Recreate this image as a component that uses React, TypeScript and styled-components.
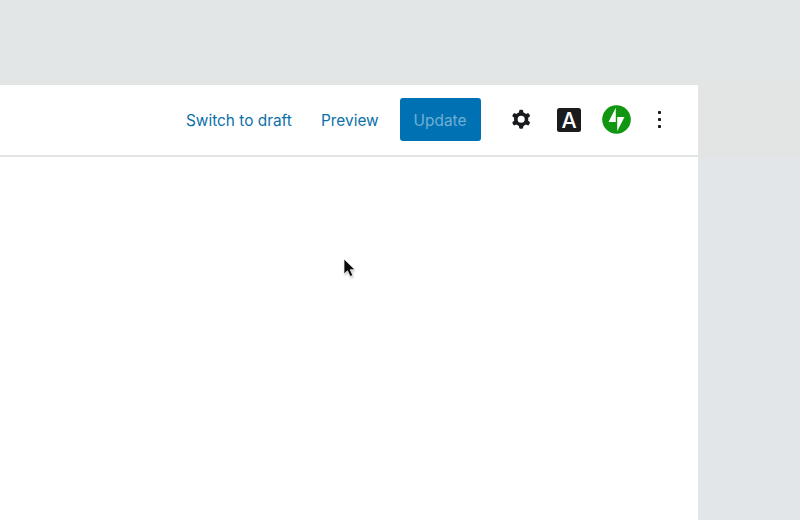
import React from "react";
import styled, { createGlobalStyle } from "styled-components";

const GlobalStyle = createGlobalStyle`
  html, body { margin: 0; padding: 0; }
  body { overflow: hidden; background: #e2e6e7; }
`;

const Desktop = styled.div`
  box-sizing: border-box;
  width: 800px;
  height: 520px;
  padding: 85px 102px 0 0;
  background: linear-gradient(#e2e6e7 0 80px, #e3e5e5 80px 157px, #e3e6e8 157px);
  font-family: Inter, "Liberation Sans", sans-serif;
`;

const EditorWindow = styled.main`
  position: relative;
  height: 435px;
  background: #fff;
`;

const Toolbar = styled.header`
  box-sizing: border-box;
  display: flex;
  align-items: flex-start;
  height: 72px;
  padding: 13px 22px 0 186px;
  border-bottom: 2px solid #e2e4e5;
`;

const TextButton = styled.button<{ $width: number; $gap: number }>`
  width: ${(p) => p.$width}px;
  height: 43px;
  margin: 0 ${(p) => p.$gap}px 0 0;
  padding: 1px 0 0;
  border: 0;
  background: none;
  color: #0c70a9;
  font: 430 15.4px/43px Inter, sans-serif;
  text-align: left;
  white-space: nowrap;
`;

const UpdateButton = styled.button`
  width: 81px;
  height: 43px;
  margin: 0 26px 0 0;
  padding: 1px 0 0;
  border: 0;
  border-radius: 3px;
  background: #0071b2;
  color: #70afd5;
  font: 430 15.4px/43px Inter, sans-serif;
  text-align: center;
`;

const IconButton = styled.button<{ $width: number; $gap: number }>`
  display: flex;
  align-items: center;
  justify-content: center;
  width: ${(p) => p.$width}px;
  height: 43px;
  margin: 0 ${(p) => p.$gap}px 0 0;
  padding: 0;
  border: 0;
  background: none;
  color: #1a1b1d;
  svg { flex: none; display: block; }
`;

const LetterBadge = styled.span`
  width: 24px;
  height: 24px;
  border-radius: 2.5px;
  background: #1a1b1d;
  color: #fff;
  font: 500 21.5px/24px Inter, sans-serif;
  text-align: center;
`;

const Pointer = styled.svg`
  position: absolute;
  left: 340px;
  top: 171px;
`;

const PointerShadow = styled.path`
  fill: #777;
  opacity: 0.4;
  filter: blur(1px);
`;

const Cog = () => (
  <svg width="28.5" height="28.5" viewBox="0 0 24 24" fill="currentColor" fillRule="evenodd">
    <path d="M10.289 4.836A1 1 0 0111.275 4h1.306a1 1 0 01.987.836l.244 1.466c.787.26 1.503.679 2.108 1.218l1.393-.522a1 1 0 011.216.437l.653 1.13a1 1 0 01-.23 1.273l-1.148.944a6.025 6.025 0 010 2.435l1.149.946a1 1 0 01.23 1.272l-.653 1.13a1 1 0 01-1.216.437l-1.394-.522c-.605.54-1.32.958-2.108 1.218l-.244 1.466a1 1 0 01-.987.836h-1.306a1 1 0 01-.986-.836l-.244-1.466a5.995 5.995 0 01-2.108-1.218l-1.394.522a1 1 0 01-1.217-.436l-.653-1.131a1 1 0 01.23-1.272l1.149-.946a6.026 6.026 0 010-2.435l-1.148-.944a1 1 0 01-.23-1.272l.653-1.131a1 1 0 011.217-.437l1.393.522a5.994 5.994 0 012.108-1.218l.244-1.466zM14.929 12a3 3 0 11-6 0 3 3 0 016 0z" />
  </svg>
);

const Jetpack = () => (
  <svg width="29" height="29" viewBox="0 0 32 32">
    <circle cx="16" cy="16" r="15.8" fill="#109610" />
    <path d="M15.2 18.7H7.2L15.2 3.1ZM16.8 28.9V13.3H24.8Z" fill="#fff" />
  </svg>
);

const MoreDots = () => (
  <svg width="5" height="19" viewBox="0 0 5 19" fill="#1a1b1d">
    <rect x="1" y="1" width="3" height="3" rx=".7" />
    <rect x="1" y="8" width="3" height="3" rx=".7" />
    <rect x="1" y="15" width="3" height="3" rx=".7" />
  </svg>
);

export default function App() {
  return (
    <Desktop>
      <GlobalStyle />
      <EditorWindow>
        <Toolbar>
          <TextButton $width={106} $gap={29}>Switch to draft</TextButton>
          <TextButton $width={57} $gap={21.5}>Preview</TextButton>
          <UpdateButton>Update</UpdateButton>
          <IconButton $width={29} $gap={21} aria-label="Settings"><Cog /></IconButton>
          <IconButton $width={25} $gap={20.5} aria-label="Styles"><LetterBadge>A</LetterBadge></IconButton>
          <IconButton $width={29} $gap={26} aria-label="Jetpack"><Jetpack /></IconButton>
          <IconButton $width={5} $gap={0} aria-label="More"><MoreDots /></IconButton>
        </Toolbar>
        <Pointer width="20" height="26" viewBox="0 0 20 26">
          <PointerShadow d="M4.5 5V20L8 17L11 22.5L13.8 21L11.5 16H15.5Z" />
          <path d="M4 3V18L7.5 14.8L10.2 20.5L12.8 19.3L10.2 13.7H15Z" fill="#0b0b0d" stroke="#fff" strokeWidth=".7" />
        </Pointer>
      </EditorWindow>
    </Desktop>
  );
}
